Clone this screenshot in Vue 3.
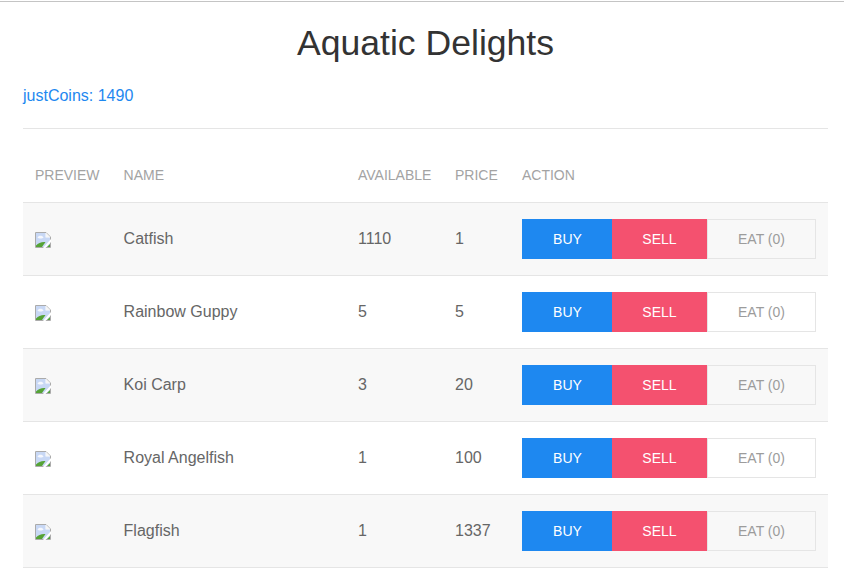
<script setup>
const fishes = [
  { name: 'Catfish', available: 1110, price: 1 },
  { name: 'Rainbow Guppy', available: 5, price: 5 },
  { name: 'Koi Carp', available: 3, price: 20 },
  { name: 'Royal Angelfish', available: 1, price: 100 },
  { name: 'Flagfish', available: 1, price: 1337 },
]
</script>

<template>
  <div class="topline"></div>
  <div class="page">
    <h1 class="title">Aquatic Delights</h1>
    <p class="coins">justCoins: 1490</p>
    <hr class="rule" />
    <table class="market">
      <colgroup>
        <col class="col-preview" />
        <col class="col-name" />
        <col class="col-available" />
        <col class="col-price" />
        <col />
      </colgroup>
      <thead>
        <tr>
          <th>Preview</th>
          <th>Name</th>
          <th>Available</th>
          <th>Price</th>
          <th>Action</th>
        </tr>
      </thead>
      <tbody>
        <tr v-for="fish in fishes" :key="fish.name">
          <td>
            <svg class="broken" width="16" height="16" viewBox="0 0 16 16">
              <path d="M0.5 0.5H11L15.5 5V15.5H0.5Z" fill="#fff" stroke="#ababab" />
              <path d="M1 1H10.5V5.5H15V15H1Z" fill="#c8d8f5" />
              <path d="M2.5 5.5C3.5 3.3 7.5 3.3 8.5 5.5C7.5 6.8 3.5 6.8 2.5 5.5Z" fill="#f5f8fe" />
              <path d="M11 1L15 5H11Z" fill="#f6f6f6" />
              <path d="M1 15V13.5C3.5 11 6.5 9.5 10.5 10L7 15Z" fill="#55a336" />
              <path d="M16 7L8 16H10.5L16 10Z" fill="#fff" />
              <path d="M12 15H15V12Z" fill="#55a336" />
            </svg>
          </td>
          <td>{{ fish.name }}</td>
          <td>{{ fish.available }}</td>
          <td>{{ fish.price }}</td>
          <td>
            <div class="actions">
              <button class="btn buy">BUY</button>
              <button class="btn sell">SELL</button>
              <button class="btn eat">EAT (0)</button>
            </div>
          </td>
        </tr>
      </tbody>
    </table>
  </div>
</template>

<style>
body {
  background: #fff;
}
</style>

<style scoped>
.topline {
  height: 1px;
  margin-top: 1px;
  background: #c4c4c4;
}
.page {
  padding: 0 16px 0 23px;
  font-family: "Liberation Sans", Arial, sans-serif;
  color: #666;
}
.title {
  margin: 0;
  padding-top: 19px;
  font-size: 35.6px;
  font-weight: 400;
  line-height: 44px;
  text-align: center;
  color: #333;
}
.coins {
  margin: 0;
  padding-top: 20px;
  font-size: 16px;
  line-height: 22px;
  color: #1e88f0;
}
.rule {
  margin: 21px 0 0;
  border: 0;
  border-top: 1px solid #e5e5e5;
}
.market {
  width: 100%;
  margin-top: 19px;
  border-collapse: collapse;
  table-layout: fixed;
}
.col-preview {
  width: 88.6px;
}
.col-name {
  width: 234.4px;
}
.col-available {
  width: 97px;
}
.col-price {
  width: 67px;
}
th {
  height: 54px;
  padding: 0 12px;
  text-align: left;
  font-size: 14px;
  font-weight: 400;
  text-transform: uppercase;
  color: #a3a3a3;
}
td {
  height: 72px;
  padding: 0 12px;
  font-size: 16px;
  border-top: 1px solid #e5e5e5;
  border-bottom: 1px solid #e5e5e5;
}
tbody tr:nth-child(odd) {
  background: #f8f8f8;
}
.broken {
  display: block;
  margin-top: 1px;
}
.actions {
  display: flex;
}
.btn {
  height: 40px;
  padding: 0;
  border: 0;
  font-family: inherit;
  font-size: 14px;
  color: #fff;
}
.buy {
  width: 90px;
  padding-left: 1px;
  background: #1e88f0;
}
.sell {
  width: 95px;
  background: #f4516f;
}
.eat {
  width: 109px;
  background: transparent;
  border: 1px solid #e5e5e5;
  color: #9c9c9c;
}
</style>
